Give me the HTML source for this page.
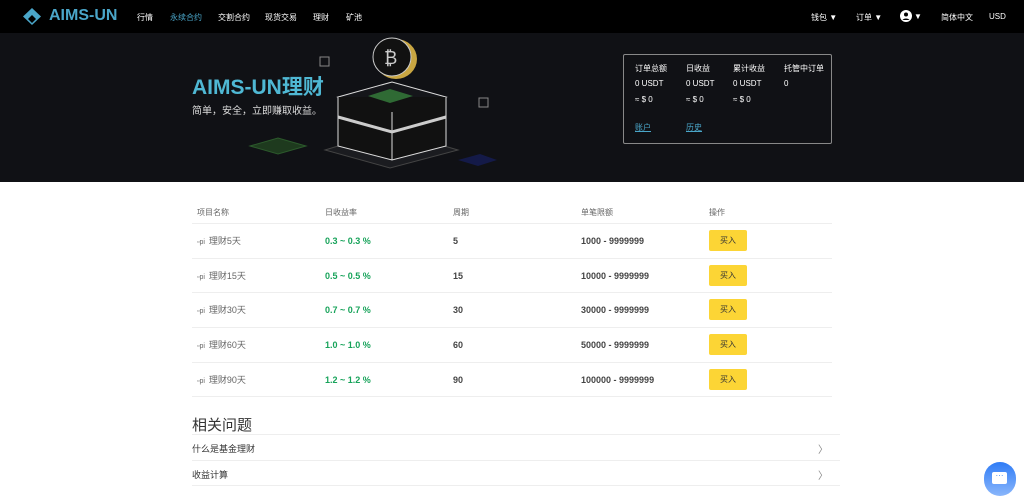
<!DOCTYPE html>
<html><head><meta charset="utf-8"><style>
*{margin:0;padding:0;box-sizing:border-box}
body{width:1024px;height:494px;overflow:hidden;background:#fff;font-family:"Liberation Sans","Noto Sans CJK SC",sans-serif;position:relative}
.nav{position:absolute;left:0;top:0;width:1024px;height:33px;background:#000;color:#fff;font-size:8px}
.nav span{position:absolute;top:12px}
.banner{position:absolute;left:0;top:33px;width:1024px;height:149px;background:#101115}
.a{position:absolute}
.th{position:absolute;top:207px;font-size:8px;color:#666}
.row{position:absolute;left:192px;width:640px;height:35px;border-top:1px solid #eee;font-size:9px}
.row div{position:absolute;top:12px}
.g{color:#17a35a;font-weight:bold}
.b{color:#444;font-weight:bold}
.btn{position:absolute;left:517px!important;top:6px!important;width:38px;height:21px;background:#fcd535;border-radius:2px;font-size:8px;color:#333;text-align:center;line-height:21px}
.q{position:absolute;left:192px;width:648px;height:26px;border-top:1px solid #eee;font-size:9px;color:#333;padding-top:7px}
.q i{position:absolute;right:12px;top:6px;font-style:normal;color:#888;font-size:10px}
</style></head><body>
<div class="nav">
<svg class="a" style="left:23px;top:8px" width="18" height="17" viewBox="0 0 18 17"><path d="M9 0L18 8.5 9 17 0 8.5Z" fill="#4aa6c9"/><path d="M9 7L13 11 9 15 5 11Z" fill="#000"/></svg>
<div class="a" style="left:49px;top:7px;font-size:16px;font-weight:bold;color:#4aa6c9">AIMS-UN</div>
<span style="left:137px">行情</span><span style="left:170px;color:#4aa6c9">永续合约</span><span style="left:218px">交割合约</span><span style="left:265px">现货交易</span><span style="left:313px">理财</span><span style="left:346px">矿池</span>
<span style="left:811px">钱包 ▼</span><span style="left:856px">订单 ▼</span>
<svg class="a" style="left:900px;top:10px" width="12" height="12" viewBox="0 0 12 12"><circle cx="6" cy="6" r="6" fill="#fff"/><circle cx="6" cy="4.5" r="2" fill="#000"/><path d="M2.5 10a4 3 0 0 1 7 0" fill="#000"/></svg><span style="left:914px">▼</span>
<span style="left:941px">简体中文</span><span style="left:989px">USD</span>
</div>
<div class="banner">
<div class="a" style="left:192px;top:38px;font-size:21px;font-weight:bold;color:#4fb8d4">AIMS-UN理财</div>
<div class="a" style="left:192px;top:69px;font-size:10px;color:#ddd">简单，安全，立即赚取收益。</div>
<svg class="a" style="left:240px;top:0" width="280" height="149" viewBox="240 33 280 149">
<rect x="320" y="57" width="9" height="9" fill="none" stroke="#888"/>
<rect x="479" y="98" width="9" height="9" fill="none" stroke="#888"/>
<path d="M250 146L278 138 306 146 278 154Z" fill="#1e3a1e" stroke="#2c5a2c"/>
<path d="M325 150L390 130 458 150 390 168Z" fill="#1b1c20" stroke="#444"/>
<path d="M458 160L480 154 497 160 478 166Z" fill="#141a48"/>
<path d="M338 97L392 82 446 97 392 112Z" fill="#15161a" stroke="#ddd"/>
<path d="M338 97V146L392 160 446 146V97M392 112V160" fill="#111" stroke="#ddd"/>
<path d="M338 117L392 132 446 117" stroke="#ccc" stroke-width="3" fill="none"/>
<path d="M368 96L390 89 413 96 390 103Z" fill="#2f6a34"/>
<ellipse cx="396" cy="59" rx="21" ry="20" fill="#c9a642"/>
<ellipse cx="392" cy="57" rx="19" ry="19" fill="#111" stroke="#ccc"/>
<text x="384" y="64" fill="#ccc" font-size="18" font-family="Liberation Sans">₿</text>
</svg>
<div class="a" style="left:623px;top:21px;width:209px;height:90px;border:1px solid #888;border-radius:2px;font-size:8px;color:#fff">
<div class="a" style="left:11px;top:8px">订单总额</div><div class="a" style="left:62px;top:8px">日收益</div><div class="a" style="left:109px;top:8px">累计收益</div><div class="a" style="left:160px;top:8px">托管中订单</div>
<div class="a" style="left:11px;top:24px">0 USDT</div><div class="a" style="left:62px;top:24px">0 USDT</div><div class="a" style="left:109px;top:24px">0 USDT</div><div class="a" style="left:160px;top:24px">0</div>
<div class="a" style="left:11px;top:40px">≈ $ 0</div><div class="a" style="left:62px;top:40px">≈ $ 0</div><div class="a" style="left:109px;top:40px">≈ $ 0</div>
<div class="a" style="left:11px;top:67px;color:#4aa6c9;text-decoration:underline">账户</div><div class="a" style="left:62px;top:67px;color:#4aa6c9;text-decoration:underline">历史</div>
</div>
</div>
<div class="th" style="left:197px">项目名称</div><div class="th" style="left:325px">日收益率</div><div class="th" style="left:453px">周期</div><div class="th" style="left:581px">单笔限额</div><div class="th" style="left:709px">操作</div>
<div class="row" style="top:223px"><div style="left:5px;top:10px;font-size:7px;color:#666">▫pi&nbsp; <span style="font-size:9px">理财5天</span></div><div class="g" style="left:133px">0.3 ~ 0.3 %</div><div class="b" style="left:261px">5</div><div class="b" style="left:389px">1000 - 9999999</div><div class="btn">买入</div></div>
<div class="row" style="top:258px"><div style="left:5px;top:10px;font-size:7px;color:#666">▫pi&nbsp; <span style="font-size:9px">理财15天</span></div><div class="g" style="left:133px">0.5 ~ 0.5 %</div><div class="b" style="left:261px">15</div><div class="b" style="left:389px">10000 - 9999999</div><div class="btn">买入</div></div>
<div class="row" style="top:292px"><div style="left:5px;top:10px;font-size:7px;color:#666">▫pi&nbsp; <span style="font-size:9px">理财30天</span></div><div class="g" style="left:133px">0.7 ~ 0.7 %</div><div class="b" style="left:261px">30</div><div class="b" style="left:389px">30000 - 9999999</div><div class="btn">买入</div></div>
<div class="row" style="top:327px"><div style="left:5px;top:10px;font-size:7px;color:#666">▫pi&nbsp; <span style="font-size:9px">理财60天</span></div><div class="g" style="left:133px">1.0 ~ 1.0 %</div><div class="b" style="left:261px">60</div><div class="b" style="left:389px">50000 - 9999999</div><div class="btn">买入</div></div>
<div class="row" style="top:362px;border-bottom:1px solid #eee"><div style="left:5px;top:10px;font-size:7px;color:#666">▫pi&nbsp; <span style="font-size:9px">理财90天</span></div><div class="g" style="left:133px">1.2 ~ 1.2 %</div><div class="b" style="left:261px">90</div><div class="b" style="left:389px">100000 - 9999999</div><div class="btn">买入</div></div>
<div class="a" style="left:192px;top:414px;font-size:15px;color:#333">相关问题</div>
<div class="q" style="top:434px">什么是基金理财<i>〉</i></div>
<div class="q" style="top:460px;border-bottom:1px solid #eee">收益计算<i>〉</i></div>
<div class="a" style="left:984px;top:462px;width:32px;height:34px;border-radius:16px;background:linear-gradient(#2f7cf6,#8ab6fb)"></div>
<div class="a" style="left:992px;top:472px;width:15px;height:12px;background:#fff;border-radius:2px;color:#2f7cf6;font-size:8px;text-align:center;line-height:8px">···</div>
</body></html>
